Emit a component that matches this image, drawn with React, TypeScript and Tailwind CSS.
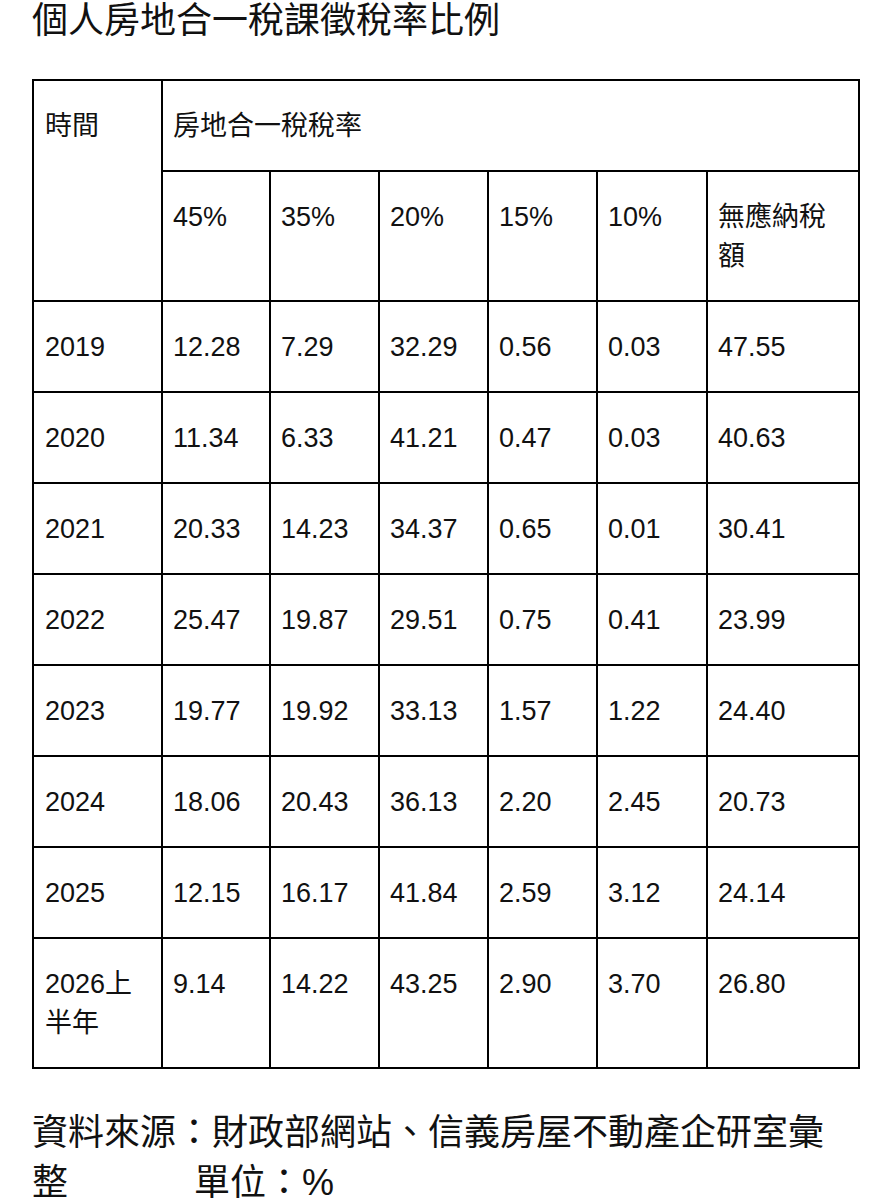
const font = '[font-family:"Liberation_Sans","Noto_Sans_CJK_TC",sans-serif]';

const rates = ['45%', '35%', '20%', '15%', '10%'];

const rows: { year: React.ReactNode; values: string[] }[] = [
  { year: '2019', values: ['12.28', '7.29', '32.29', '0.56', '0.03', '47.55'] },
  { year: '2020', values: ['11.34', '6.33', '41.21', '0.47', '0.03', '40.63'] },
  { year: '2021', values: ['20.33', '14.23', '34.37', '0.65', '0.01', '30.41'] },
  { year: '2022', values: ['25.47', '19.87', '29.51', '0.75', '0.41', '23.99'] },
  { year: '2023', values: ['19.77', '19.92', '33.13', '1.57', '1.22', '24.40'] },
  { year: '2024', values: ['18.06', '20.43', '36.13', '2.20', '2.45', '20.73'] },
  { year: '2025', values: ['12.15', '16.17', '41.84', '2.59', '3.12', '24.14'] },
  {
    year: (
      <>
        2026上
        <br />
        半年
      </>
    ),
    values: ['9.14', '14.22', '43.25', '2.90', '3.70', '26.80'],
  },
];

const cell = 'border-2 border-black align-top pl-[10px] pr-[6px] pt-[26px] pb-[24px] text-left font-normal';

export default function App() {
  return (
    <div className={`${font} min-h-[1200px] bg-white pl-[32px] text-[#111]`}>
      <h1 className="text-[36px] leading-[41px] font-normal">個人房地合一稅課徵稅率比例</h1>

      <table className="mt-[38px] w-[826px] table-fixed border-collapse text-[27px] leading-[39px]">
        <colgroup>
          <col className="w-[129px]" />
          <col className="w-[108px]" />
          <col className="w-[109px]" />
          <col className="w-[109px]" />
          <col className="w-[109px]" />
          <col className="w-[110px]" />
          <col className="w-[152px]" />
        </colgroup>
        <thead>
          <tr>
            <th rowSpan={2} className={`${cell} pl-[11px]`}>
              時間
            </th>
            <th colSpan={6} className={cell}>
              房地合一稅稅率
            </th>
          </tr>
          <tr>
            {rates.map((r) => (
              <th key={r} className={cell}>
                {r}
              </th>
            ))}
            <th className={cell}>
              無應納稅
              <br />
              額
            </th>
          </tr>
        </thead>
        <tbody>
          {rows.map((row, i) => (
            <tr key={i}>
              <td className={`${cell} pl-[11px]`}>{row.year}</td>
              {row.values.map((v, j) => (
                <td key={j} className={cell}>
                  {v}
                </td>
              ))}
            </tr>
          ))}
        </tbody>
      </table>

      <p className="mt-[39px] text-[36px] leading-[50px]">
        資料來源：財政部網站、信義房屋不動產企研室彙
        <br />
        <span className="inline-block w-[162px]">整</span>
        單位：%
      </p>
    </div>
  );
}
